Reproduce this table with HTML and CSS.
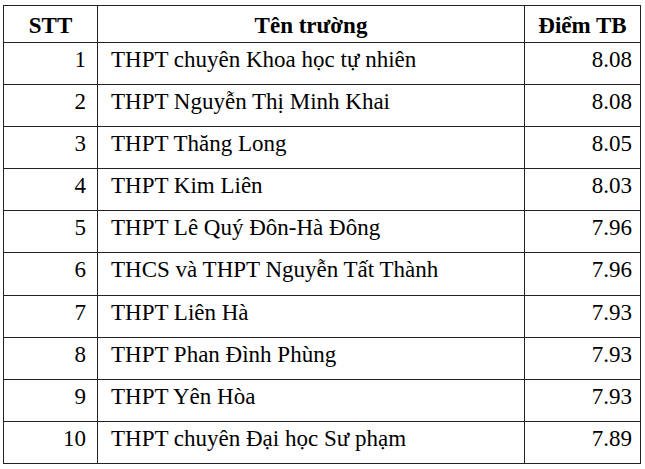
FILE: index.html
```html
<!DOCTYPE html>
<html>
<head>
<meta charset="utf-8">
<link rel="stylesheet" href="styles.css">
</head>
<body>
<div class="rank">
  <div class="cell head">STT</div>
  <div class="cell head">Tên trường</div>
  <div class="cell head">Điểm TB</div>

  <div class="cell num">1</div><div class="cell name">THPT chuyên Khoa học tự nhiên</div><div class="cell score">8.08</div>
  <div class="cell num">2</div><div class="cell name">THPT Nguyễn Thị Minh Khai</div><div class="cell score">8.08</div>
  <div class="cell num">3</div><div class="cell name">THPT Thăng Long</div><div class="cell score">8.05</div>
  <div class="cell num">4</div><div class="cell name">THPT Kim Liên</div><div class="cell score">8.03</div>
  <div class="cell num">5</div><div class="cell name">THPT Lê Quý Đôn-Hà Đông</div><div class="cell score">7.96</div>
  <div class="cell num">6</div><div class="cell name">THCS và THPT Nguyễn Tất Thành</div><div class="cell score">7.96</div>
  <div class="cell num">7</div><div class="cell name">THPT Liên Hà</div><div class="cell score">7.93</div>
  <div class="cell num">8</div><div class="cell name">THPT Phan Đình Phùng</div><div class="cell score">7.93</div>
  <div class="cell num">9</div><div class="cell name">THPT Yên Hòa</div><div class="cell score">7.93</div>
  <div class="cell num">10</div><div class="cell name">THPT chuyên Đại học Sư phạm</div><div class="cell score">7.89</div>
</div>
</body>
</html>
```
FILE: styles.css
```css
body {
  margin: 0;
  padding: 0;
  background: #fff;
  color: #000;
  font-family: "Times New Roman", "Liberation Serif", Tinos, serif;
  font-size: 23px;
}
.rank {
  margin: 5px 0 0 3px;
  width: 638px;
  display: grid;
  grid-template-columns: 94px 427px 116px;
  grid-template-rows: 37px repeat(10, 42.1px);
  border-top: 1px solid #222;
  border-left: 1px solid #222;
  box-sizing: border-box;
}
.cell {
  font-family: "Times New Roman", "Liberation Serif", Tinos, serif;
  font-size: 23px;
  border-right: 1px solid #222;
  border-bottom: 1px solid #222;
  line-height: 25px;
  padding-top: 4px;
  box-sizing: border-box;
  white-space: nowrap;
}
.head {
  padding-top: 7px;
  font-weight: bold;
  text-align: center;
}
.num {
  text-align: right;
  padding-right: 11px;
}
.score {
  text-align: right;
  padding-right: 8px;
}
.name {
  padding-left: 13px;
}
```
